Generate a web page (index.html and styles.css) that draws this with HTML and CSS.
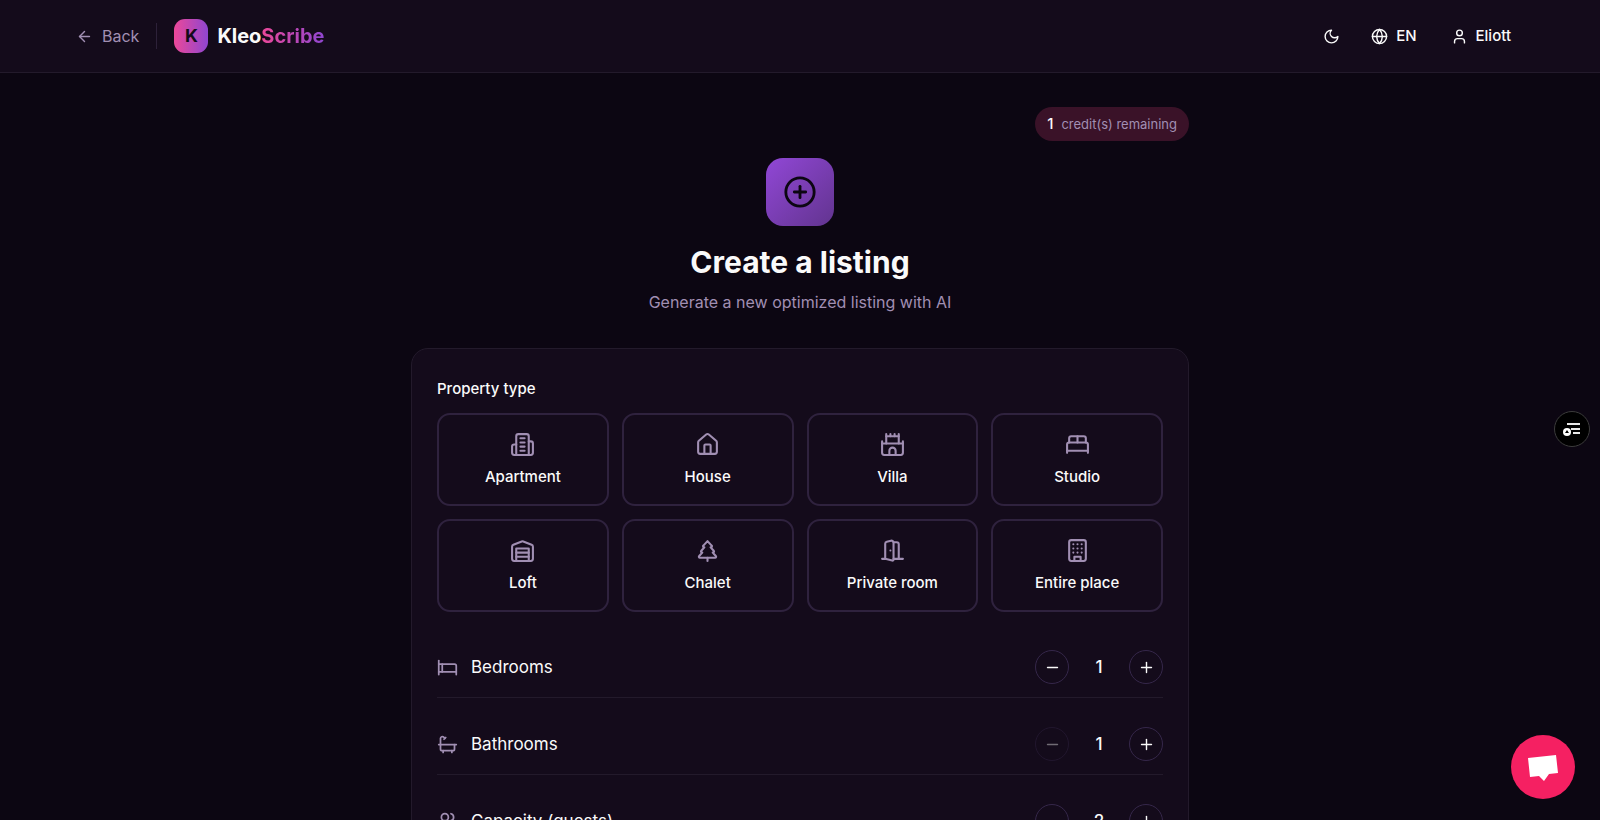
FILE: index.html
```html
<!DOCTYPE html>
<html lang="en">
<head>
  <meta charset="UTF-8">
  <meta name="viewport" content="width=device-width, initial-scale=1.0">
  <title>KleoScribe - Create a listing</title>
  <link rel="stylesheet" href="styles.css">
</head>
<body>
  <header class="header">
    <div class="header-inner">
      <div class="header-left">
        <a href="#" class="back-link">
          <svg class="icon icon-sm" viewBox="0 0 24 24"><path d="m12 19-7-7 7-7"/><path d="M19 12H5"/></svg>
          Back
        </a>
        <div class="separator"></div>
        <a href="#" class="brand">
          <span class="brand-logo">K</span>
          <span class="brand-name">Kleo<span class="brand-accent">Scribe</span></span>
        </a>
      </div>
      <div class="header-right">
        <button type="button" class="header-btn header-btn-icon" aria-label="Toggle theme">
          <svg class="icon icon-sm" viewBox="0 0 24 24"><path d="M12 3a6 6 0 0 0 9 9 9 9 0 1 1-9-9Z"/></svg>
        </button>
        <button type="button" class="header-btn">
          <svg class="icon icon-sm" viewBox="0 0 24 24"><circle cx="12" cy="12" r="10"/><path d="M12 2a14.5 14.5 0 0 0 0 20 14.5 14.5 0 0 0 0-20"/><path d="M2 12h20"/></svg>
          EN
        </button>
        <button type="button" class="header-btn">
          <svg class="icon icon-sm" viewBox="0 0 24 24"><path d="M19 21v-2a4 4 0 0 0-4-4H9a4 4 0 0 0-4 4v2"/><circle cx="12" cy="7" r="4"/></svg>
          Eliott
        </button>
      </div>
    </div>
  </header>

  <main class="main">
    <div class="credits">
      <strong class="credits-count">1</strong>
      <span class="credits-label">credit(s) remaining</span>
    </div>

    <div class="intro">
      <div class="intro-icon">
        <svg class="icon icon-xl" viewBox="0 0 24 24"><circle cx="12" cy="12" r="10"/><path d="M8 12h8"/><path d="M12 8v8"/></svg>
      </div>
      <h1 class="intro-title">Create a listing</h1>
      <p class="intro-text">Generate a new optimized listing with AI</p>
    </div>

    <form class="card">
      <h2 class="field-label" id="property-type">Property type</h2>
      <div class="type-grid" role="group" aria-labelledby="property-type">
        <button type="button" class="type-btn">
          <svg class="icon icon-lg" viewBox="0 0 24 24"><path d="M6 22V4a2 2 0 0 1 2-2h8a2 2 0 0 1 2 2v18Z"/><path d="M6 12H4a2 2 0 0 0-2 2v6a2 2 0 0 0 2 2h2"/><path d="M18 9h2a2 2 0 0 1 2 2v9a2 2 0 0 1-2 2h-2"/><path d="M10 6h4"/><path d="M10 10h4"/><path d="M10 14h4"/><path d="M10 18h4"/></svg>
          Apartment
        </button>
        <button type="button" class="type-btn">
          <svg class="icon icon-lg" viewBox="0 0 24 24"><path d="M15 21v-8a1 1 0 0 0-1-1h-4a1 1 0 0 0-1 1v8"/><path d="M3 10a2 2 0 0 1 .709-1.528l7-5.999a2 2 0 0 1 2.582 0l7 5.999A2 2 0 0 1 21 10v9a2 2 0 0 1-2 2H5a2 2 0 0 1-2-2z"/></svg>
          House
        </button>
        <button type="button" class="type-btn">
          <svg class="icon icon-lg" viewBox="0 0 24 24"><path d="M22 20v-9H2v9a2 2 0 0 0 2 2h16a2 2 0 0 0 2-2Z"/><path d="M18 11V4H6v7"/><path d="M15 22v-4a3 3 0 0 0-6 0v4"/><path d="M22 11V9"/><path d="M2 11V9"/><path d="M6 4V2"/><path d="M18 4V2"/><path d="M10 4V2"/><path d="M14 4V2"/></svg>
          Villa
        </button>
        <button type="button" class="type-btn">
          <svg class="icon icon-lg" viewBox="0 0 24 24"><path d="M2 20v-8a2 2 0 0 1 2-2h16a2 2 0 0 1 2 2v8"/><path d="M4 10V6a2 2 0 0 1 2-2h12a2 2 0 0 1 2 2v4"/><path d="M12 4v6"/><path d="M2 18h20"/></svg>
          Studio
        </button>
        <button type="button" class="type-btn">
          <svg class="icon icon-lg" viewBox="0 0 24 24"><path d="M22 8.35V20a2 2 0 0 1-2 2H4a2 2 0 0 1-2-2V8.35A2 2 0 0 1 3.26 6.5l8-3.2a2 2 0 0 1 1.48 0l8 3.2A2 2 0 0 1 22 8.35Z"/><path d="M6 18h12"/><path d="M6 14h12"/><path d="M6 22V10h12v12"/></svg>
          Loft
        </button>
        <button type="button" class="type-btn">
          <svg class="icon icon-lg" viewBox="0 0 24 24"><path d="m17 14 3 3.3a1 1 0 0 1-.7 1.7H4.7a1 1 0 0 1-.7-1.7L7 14h-.3a1 1 0 0 1-.7-1.7L9 9h-.2A1 1 0 0 1 8 7.3L12 3l4 4.3a1 1 0 0 1-.8 1.7H15l3 3.3a1 1 0 0 1-.7 1.7H17Z"/><path d="M12 22v-3"/></svg>
          Chalet
        </button>
        <button type="button" class="type-btn">
          <svg class="icon icon-lg" viewBox="0 0 24 24"><path d="M13 4h3a2 2 0 0 1 2 2v14"/><path d="M2 20h3"/><path d="M13 20h9"/><path d="M10 12v.01"/><path d="M13 4.562v16.157a1 1 0 0 1-1.242.97L5 20V5.562a2 2 0 0 1 1.515-1.94l4-1A2 2 0 0 1 13 4.561Z"/></svg>
          Private room
        </button>
        <button type="button" class="type-btn">
          <svg class="icon icon-lg" viewBox="0 0 24 24"><rect x="4" y="2" width="16" height="20" rx="2"/><path d="M9 22v-4h6v4"/><path d="M8 6h.01"/><path d="M16 6h.01"/><path d="M12 6h.01"/><path d="M12 10h.01"/><path d="M12 14h.01"/><path d="M16 10h.01"/><path d="M16 14h.01"/><path d="M8 10h.01"/><path d="M8 14h.01"/></svg>
          Entire place
        </button>
      </div>

      <div class="counters">
        <div class="counter-row">
          <div class="counter-label">
            <svg class="icon icon-md" viewBox="0 0 24 24"><path d="M2 4v16"/><path d="M2 8h18a2 2 0 0 1 2 2v10"/><path d="M2 17h20"/><path d="M6 8v9"/></svg>
            Bedrooms
          </div>
          <div class="stepper">
            <button type="button" class="step-btn" aria-label="Remove a bedroom"><svg class="icon icon-sm" viewBox="0 0 24 24"><path d="M5 12h14"/></svg></button>
            <span class="step-value">1</span>
            <button type="button" class="step-btn" aria-label="Add a bedroom"><svg class="icon icon-sm" viewBox="0 0 24 24"><path d="M5 12h14"/><path d="M12 5v14"/></svg></button>
          </div>
        </div>
        <div class="counter-row">
          <div class="counter-label">
            <svg class="icon icon-md" viewBox="0 0 24 24"><path d="M10 4 8 6"/><path d="M17 19v2"/><path d="M2 12h20"/><path d="M7 19v2"/><path d="M9 5 7.621 3.621A2.121 2.121 0 0 0 4 5v12a2 2 0 0 0 2 2h12a2 2 0 0 0 2-2v-5"/></svg>
            Bathrooms
          </div>
          <div class="stepper">
            <button type="button" class="step-btn" aria-label="Remove a bathroom" disabled><svg class="icon icon-sm" viewBox="0 0 24 24"><path d="M5 12h14"/></svg></button>
            <span class="step-value">1</span>
            <button type="button" class="step-btn" aria-label="Add a bathroom"><svg class="icon icon-sm" viewBox="0 0 24 24"><path d="M5 12h14"/><path d="M12 5v14"/></svg></button>
          </div>
        </div>
        <div class="counter-row">
          <div class="counter-label">
            <svg class="icon icon-md" viewBox="0 0 24 24"><path d="M16 21v-2a4 4 0 0 0-4-4H6a4 4 0 0 0-4 4v2"/><circle cx="9" cy="7" r="4"/><path d="M22 21v-2a4 4 0 0 0-3-3.87"/><path d="M16 3.13a4 4 0 0 1 0 7.75"/></svg>
            Capacity (guests)
          </div>
          <div class="stepper">
            <button type="button" class="step-btn" aria-label="Remove a guest"><svg class="icon icon-sm" viewBox="0 0 24 24"><path d="M5 12h14"/></svg></button>
            <span class="step-value">2</span>
            <button type="button" class="step-btn" aria-label="Add a guest"><svg class="icon icon-sm" viewBox="0 0 24 24"><path d="M5 12h14"/><path d="M12 5v14"/></svg></button>
          </div>
        </div>
      </div>
    </form>
  </main>

  <button type="button" class="side-widget" aria-label="Open summary">
    <svg width="20" height="20" viewBox="0 0 20 20">
      <path d="M5 5h13M9 10h9M11 14h7" stroke="#e8e8e8" stroke-width="2" fill="none"/>
      <circle cx="5" cy="13" r="4" fill="#fff"/>
      <path d="m5 11 2 3H3z" fill="#000"/>
    </svg>
  </button>
  <button type="button" class="chat-button" aria-label="Open chat">
    <svg width="32" height="28" viewBox="0 0 32 28"><path d="m1 5 28-3 2 18-9 1-5 7-5-5-9 1z" fill="#fff"/></svg>
  </button>
</body>
</html>
```
FILE: styles.css
```css
* {
  box-sizing: border-box;
  margin: 0;
  padding: 0;
}
body {
  background-color: #0c0612;
  color: #fafafa;
  font-family: Inter, "Liberation Sans", sans-serif;
  font-size: 16px;
  line-height: 26px;
}
button {
  font: inherit;
  color: inherit;
  background: none;
  border: none;
  cursor: pointer;
}
a {
  color: inherit;
  text-decoration: none;
}

/* Icons */
.icon {
  fill: none;
  stroke: currentColor;
  stroke-width: 2;
  stroke-linecap: round;
  stroke-linejoin: round;
  flex-shrink: 0;
}
.icon-sm {
  width: 17px;
  height: 17px;
}
.icon-md {
  width: 21px;
  height: 21px;
}
.icon-lg {
  width: 25px;
  height: 25px;
}
.icon-xl {
  width: 34px;
  height: 34px;
}

/* Header */
.header {
  background-color: #140b1b;
  border-bottom: 1px solid #231a2b;
}
.header-inner {
  max-width: 1482px;
  height: 72px;
  margin: 0 auto;
  padding: 0 17px;
  display: flex;
  align-items: center;
  justify-content: space-between;
}
.header-left,
.header-right,
.back-link,
.brand,
.header-btn {
  display: flex;
  align-items: center;
}
.header-left {
  gap: 17px;
}
.back-link {
  gap: 9px;
  color: #a18fb3;
}
.separator {
  width: 1px;
  height: 26px;
  background-color: #2d2139;
}
.brand {
  gap: 9px;
}
.brand-logo {
  width: 34px;
  height: 34px;
  border-radius: 11px;
  background: linear-gradient(to right, #ec4899, #8f46d0);
  color: #140b1b;
  font-size: 18px;
  font-weight: 700;
  line-height: 34px;
  text-align: center;
}
.brand-name {
  font-size: 20px;
  font-weight: 700;
}
.brand-accent {
  background: linear-gradient(to right, #ec4899, #8f46d0);
  -webkit-background-clip: text;
  background-clip: text;
  color: transparent;
}
.header-right {
  gap: 8px;
}
.header-btn {
  gap: 8px;
  padding: 0 13px;
  height: 38px;
  font-size: 15px;
  font-weight: 500;
}
.header-btn-icon {
  justify-content: center;
  width: 38px;
  padding: 0;
}

/* Page content */
.main {
  max-width: 812px;
  margin: 0 auto;
  padding: 34px 17px;
  display: flex;
  flex-direction: column;
}
.credits {
  align-self: flex-end;
  display: flex;
  align-items: center;
  gap: 8px;
  height: 34px;
  padding: 0 12px;
  border-radius: 17px;
  background-color: #3a1228;
}
.credits-count {
  font-size: 15px;
  font-weight: 500;
}
.credits-label {
  color: #a18fb3;
  font-size: 13px;
}
.intro {
  display: flex;
  flex-direction: column;
  align-items: center;
  margin: 17px 0 33px;
  text-align: center;
}
.intro-icon {
  width: 68px;
  height: 68px;
  border-radius: 17px;
  background: linear-gradient(135deg, #9147d6, #62348f);
  color: #0c0612;
  display: flex;
  align-items: center;
  justify-content: center;
}
.intro-title {
  margin-top: 17px;
  font-size: 30px;
  font-weight: 700;
  line-height: 38px;
}
.intro-text {
  margin-top: 8px;
  color: #a18fb3;
}

/* Listing form */
.card {
  padding: 27px 25px;
  background-color: #140b1b;
  border: 1px solid #231a2b;
  border-radius: 17px;
}
.field-label {
  font-size: 15px;
  font-weight: 500;
}
.type-grid {
  display: grid;
  grid-template-columns: repeat(4, 1fr);
  gap: 13px;
  margin-top: 11px;
}
.type-btn {
  display: flex;
  flex-direction: column;
  align-items: center;
  gap: 8px;
  padding: 17px 17px 15px;
  border: 2px solid #2f223e;
  border-radius: 13px;
  font-size: 15px;
  font-weight: 500;
  line-height: 24px;
}
.type-btn .icon,
.counter-label .icon {
  color: #a18fb3;
}
.counters {
  display: flex;
  flex-direction: column;
  gap: 16px;
  margin-top: 25px;
}
.counter-row {
  display: flex;
  align-items: center;
  justify-content: space-between;
  padding: 13px 0;
  border-bottom: 1px solid #231a2b;
}
.counter-row:last-child {
  border-bottom: none;
}
.counter-label {
  display: flex;
  align-items: center;
  gap: 13px;
  font-size: 17px;
}
.stepper {
  display: flex;
  align-items: center;
  gap: 13px;
}
.step-btn {
  display: flex;
  align-items: center;
  justify-content: center;
  width: 34px;
  height: 34px;
  border: 1px solid #35274a;
  border-radius: 50%;
}
.step-btn:disabled {
  opacity: 0.4;
}
.step-value {
  width: 34px;
  font-size: 17px;
  font-weight: 500;
  text-align: center;
}

/* Floating buttons */
.side-widget,
.chat-button {
  position: fixed;
  display: flex;
  align-items: center;
  justify-content: center;
  border-radius: 50%;
}
.side-widget {
  top: 411px;
  right: 10px;
  width: 36px;
  height: 36px;
  background-color: #000;
  border: 1px solid #3c3c3c;
}
.chat-button {
  right: 25px;
  bottom: 21px;
  width: 64px;
  height: 64px;
  background-color: #f52062;
}
```
